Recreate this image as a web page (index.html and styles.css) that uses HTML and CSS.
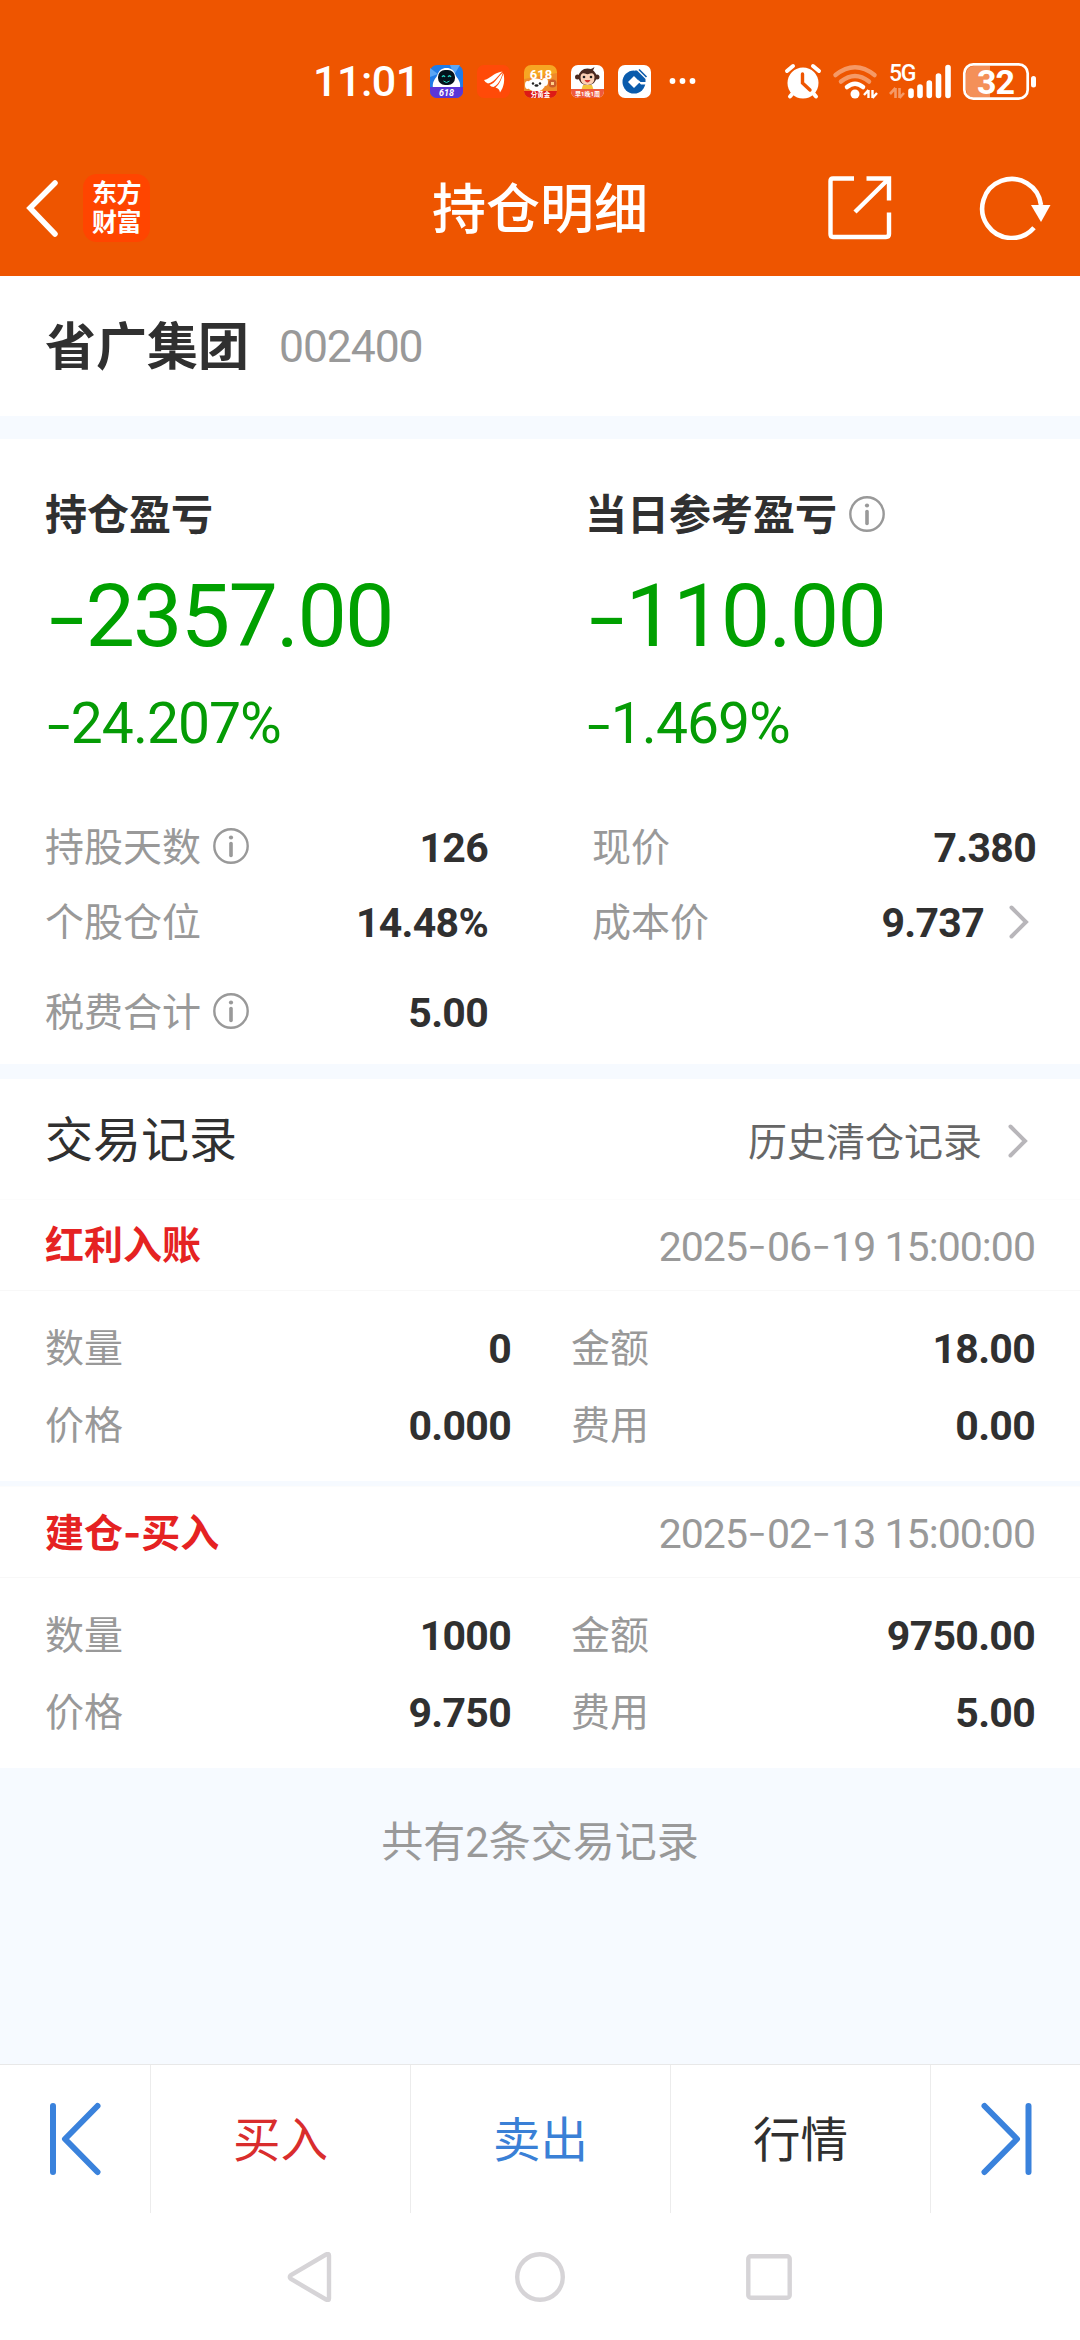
FILE: index.html
```html
<!DOCTYPE html>
<html lang="zh-CN">
<head>
    <meta charset="UTF-8">
    <meta name="viewport" content="width=device-width, initial-scale=1.0">
    <title>持仓明细</title>
    <link rel="stylesheet" href="styles.css">
</head>
<body>
    <svg width="0" height="0" class="defs">
        <symbol id="info" viewBox="0 0 36 36">
            <circle cx="18" cy="18" r="16.7" fill="none" stroke="#999" stroke-width="2.4"/>
            <circle cx="18" cy="9.5" r="2.1" fill="#999"/>
            <path d="M18 15.5V27.5" stroke="#999" stroke-width="3.6" stroke-linecap="round"/>
        </symbol>
        <symbol id="more" viewBox="0 0 20 34">
            <path d="M2.5 2.5L17 17L2.5 31.5" fill="none" stroke="#b8b6ba" stroke-width="4" stroke-linecap="round"/>
        </symbol>
    </svg>

    <div class="header">
        <div class="status">
            <span class="time">11:01</span>
            <div class="apps">
                <svg viewBox="0 0 33 33">
                    <rect width="33" height="33" rx="7" fill="#1f7be8"/>
                    <path d="M20 0L30 0L24 10ZM0 3L8 9L0 12Z" fill="#5aa6f5"/>
                    <path d="M3 23C2 17 5 14 7 11C9 5 12 3 16.5 3C21 3 24 5 26 11C28 14 31 17 30 23Z" fill="#fff"/>
                    <rect x="8" y="5" width="17" height="15" rx="7" fill="#04121c"/>
                    <path d="M12 12Q13.500 9.500 15 12M18 12Q19.500 9.500 21 12" fill="none" stroke="#23d3c0" stroke-width="1.300"/>
                    <path d="M13.500 16Q16.500 19 19.500 16" fill="none" stroke="#23d3c0" stroke-width="1"/>
                    <path d="M0 22H33V26a7 7 0 0 1-7 7H7a7 7 0 0 1-7-7Z" fill="#5a35d8"/>
                    <text x="16.500" y="31" class="tiny it" font-size="9">618</text>
                </svg>
                <svg viewBox="0 0 33 33">
                    <rect width="33" height="33" rx="7" fill="#ff4a08"/>
                    <g fill="#fff">
                        <path d="M7 15C13 14 16 8 25.500 6.500C21 10 18 17 11 18.500Q8 17.500 7 15Z"/>
                        <path d="M12.500 20C19 18 21 11 26 7.500C24 13 22.500 19 16.500 22Q14 22 12.500 20Z"/>
                        <path d="M18.500 22.500C23 19 24.500 13 26.500 8.500C28 15 27 22 23 27.500Q22.500 23.500 18.500 22.500Z"/>
                    </g>
                </svg>
                <svg viewBox="0 0 33 33">
                    <rect width="33" height="33" rx="7" fill="#f7a623"/>
                    <path d="M0 14L33 8V27H0Z" fill="#ef8b2a"/>
                    <text x="17" y="13.500" class="tiny" font-size="13">618</text>
                    <ellipse cx="12" cy="20" rx="9" ry="6.500" fill="#fff"/>
                    <ellipse cx="3.500" cy="20" rx="2.500" ry="4" fill="#fff"/>
                    <ellipse cx="21" cy="17" rx="3" ry="4" fill="#fff"/>
                    <circle cx="9" cy="18.500" r="1.200" fill="#222"/>
                    <circle cx="16" cy="18.500" r="1.200" fill="#222"/>
                    <ellipse cx="12.500" cy="20.500" rx="2" ry="1.300" fill="#222"/>
                    <circle cx="28.500" cy="18.500" r="4" fill="#c95c2c"/>
                    <rect x="27" y="17" width="3" height="3" fill="#ffd08a"/>
                    <path d="M0 26H33a7 7 0 0 1-7 7H7a7 7 0 0 1-7-7Z" fill="#dd1a16"/>
                    <text x="16.500" y="32" class="tiny" font-size="6.500">分黄金</text>
                </svg>
                <svg viewBox="0 0 33 33">
                    <rect width="33" height="33" rx="7" fill="#fff"/>
                    <path d="M14 5Q20 5 23.500 2Q22 7 19 6.500Z" fill="#4a2a20"/>
                    <circle cx="6.500" cy="12" r="2.500" fill="#4a2a20"/>
                    <circle cx="26" cy="12" r="2.500" fill="#4a2a20"/>
                    <ellipse cx="16.500" cy="12" rx="9" ry="8.500" fill="#4a2a20"/>
                    <path d="M9.500 12Q10 7 14 8.500Q16.500 10 19 8.500Q23 7 23.500 12Q23.500 20 16.500 20Q9.500 20 9.500 12Z" fill="#fbd0b4"/>
                    <circle cx="13" cy="12" r="1.300" fill="#222"/>
                    <circle cx="20" cy="12" r="1.300" fill="#222"/>
                    <path d="M13.500 15Q16.500 20 19.500 15Z" fill="#d8342c"/>
                    <path d="M12 20H21L23 26H10Z" fill="#f5c23a"/>
                    <path d="M0 24H33V26a7 7 0 0 1-7 7H7a7 7 0 0 1-7-7Z" fill="#ee5a3c"/>
                    <text x="16.500" y="31" class="tiny" font-size="6">早1晚1周</text>
                </svg>
                <svg viewBox="0 0 33 33">
                    <rect width="33" height="33" rx="7" fill="#fff"/>
                    <circle cx="16" cy="17" r="11.500" fill="#0a5bac"/>
                    <path d="M16 11L22 17L16 23L10 17Z" fill="#fff"/>
                    <path d="M20.500 17L23 19.500H33V11H20Z" fill="#fff"/>
                    <path d="M15 4L20 3.500L30 13V16.500H25Z" fill="#fff"/>
                    <path d="M16.500 5.500H19L27.500 14V17H22.500L16.500 11Z" fill="#0a5bac"/>
                    <path d="M21 4.500L28.500 12" stroke="#0a5bac" stroke-width="1.600"/>
                </svg>
            </div>
            <svg class="dots" viewBox="0 0 27 8"><g fill="#fff"><circle cx="3.500" cy="4" r="2.900"/><circle cx="13.500" cy="4" r="2.900"/><circle cx="23.500" cy="4" r="2.900"/></g></svg>
            <svg class="sys" viewBox="780 55 265 50">
                <!-- 闹钟 -->
                <circle cx="803" cy="82" r="15.500" fill="#fff"/>
                <path d="M787 70L793 65M819 70L813 65" stroke="#fff" stroke-width="4" stroke-linecap="round"/>
                <path d="M793 92L790 95.500M813 92L816 95.500" stroke="#fff" stroke-width="4" stroke-linecap="round"/>
                <path d="M802.500 73V82L810 89" stroke="#ee5500" stroke-width="3.400" fill="none" stroke-linecap="round"/>
                <!-- wifi -->
                <g fill="none" stroke="#fff" stroke-width="4.500" stroke-linecap="round">
                    <path d="M835.500 74Q855 58.500 874.500 74" opacity=".4"/>
                    <path d="M841 80.500Q855 69.500 869 80.500" opacity=".4"/>
                    <path d="M847 86Q855 79.500 863 86"/>
                </g>
                <circle cx="855" cy="93" r="4.500" fill="#fff"/>
                <path d="M868.500 89V97M868.500 89L864 94M872.500 89V97M872.500 97L877 92" stroke="#fff" stroke-width="2.400" fill="none"/>
                <!-- 信号 -->
                <text x="889" y="80" class="net">5G</text>
                <path d="M895.500 87V97M895.500 87L890 93M899.500 87V97M899.500 97L904 92" stroke="#fff" stroke-width="2.600" fill="none" opacity=".4"/>
                <g stroke="#fff" stroke-width="5.600" stroke-linecap="round">
                    <path d="M911 90V94.500M920 86V94.500M929.300 82V94.500M938.500 75V94.500M948 66.500V94.500"/>
                </g>
                <!-- 电池 -->
                <path d="M974 65H990V96.500H974a8 8 0 0 1-8-8V73a8 8 0 0 1 8-8Z" fill="#fff" opacity=".35"/>
                <rect x="964.300" y="63.300" width="63.400" height="34.400" rx="9" fill="none" stroke="#fff" stroke-width="2.700"/>
                <rect x="1031" y="75" width="5" height="11.500" rx="2.500" fill="#fff"/>
                <text x="995.500" y="92.500" class="bat">32</text>
            </svg>
        </div>
        <div class="navbar">
            <svg class="back" viewBox="0 0 36 60"><path d="M32 5L7 30L32 56" fill="none" stroke="#fff" stroke-width="5.500" stroke-linecap="round"/></svg>
            <div class="logo">东方<br>财富</div>
            <h1>持仓明细</h1>
            <svg class="share" viewBox="0 0 64 64">
                <g fill="none" stroke="#fff" stroke-width="4.400">
                    <path d="M26 2.500H5Q2.500 2.500 2.500 5V58Q2.500 61 5 61H58Q61 61 61 58V36.500"/>
                    <path d="M38.500 2.500H61V24.500M60 3.500L27 36"/>
                </g>
            </svg>
            <svg class="refresh" viewBox="0 0 74 64">
                <path d="M55 51.800A29.500 29.500 0 1 1 62 29" fill="none" stroke="#fff" stroke-width="4.600"/>
                <path d="M52 29H71.500L62 46Z" fill="#fff"/>
            </svg>
        </div>
    </div>

    <div class="stock">
        <span class="name">省广集团</span>
        <span class="code">002400</span>
    </div>

    <div class="card">
        <div class="profit">
            <div>
                <p class="label">持仓盈亏</p>
                <p class="big"><span class="dash">-</span>2357.00</p>
                <p class="pct"><span class="dash">-</span>24.207%</p>
            </div>
            <div>
                <p class="label">当日参考盈亏<svg class="info"><use href="#info"/></svg></p>
                <p class="big"><span class="dash">-</span>110.00</p>
                <p class="pct"><span class="dash">-</span>1.469%</p>
            </div>
        </div>
        <div class="detail">
            <div class="cell">持股天数<svg class="info"><use href="#info"/></svg><b>126</b></div>
            <div class="cell">现价<b>7.380</b></div>
            <div class="cell">个股仓位<b>14.48%</b></div>
            <div class="cell">成本价<b>9.737</b><svg class="more"><use href="#more"/></svg></div>
            <div class="cell last">税费合计<svg class="info"><use href="#info"/></svg><b>5.00</b></div>
        </div>
    </div>

    <div class="list-head">
        <h2>交易记录</h2>
        <span class="history">历史清仓记录</span>
        <svg class="more"><use href="#more"/></svg>
    </div>

    <div class="record">
        <div class="record-head">
            <span class="type">红利入账</span>
            <span class="date">2025<i>-</i>06<i>-</i>19 15:00:00</span>
        </div>
        <div class="record-body">
            <div class="cell">数量<b>0</b></div>
            <div class="cell">金额<b>18.00</b></div>
            <div class="cell">价格<b>0.000</b></div>
            <div class="cell">费用<b>0.00</b></div>
        </div>
    </div>
    <div class="record">
        <div class="record-head">
            <span class="type">建仓<span class="dash">-</span>买入</span>
            <span class="date">2025<i>-</i>02<i>-</i>13 15:00:00</span>
        </div>
        <div class="record-body">
            <div class="cell">数量<b>1000</b></div>
            <div class="cell">金额<b>9750.00</b></div>
            <div class="cell">价格<b>9.750</b></div>
            <div class="cell">费用<b>5.00</b></div>
        </div>
    </div>

    <p class="total">共有2条交易记录</p>

    <div class="footer">
        <div class="side"><svg viewBox="0 0 54 74"><path d="M5 4V70M49.500 4L17 37L49.500 70"/></svg></div>
        <div class="btn buy">买入</div>
        <div class="btn sell">卖出</div>
        <div class="btn">行情</div>
        <div class="side"><svg viewBox="0 0 54 74"><path d="M49.500 4V70M5.500 4L38 37L5.500 70"/></svg></div>
    </div>
    <div class="sysnav">
        <svg viewBox="0 0 50 50"><path d="M43 3.500V46.500Q43 49 40 47.500L5 27Q2.500 25 5 23L40 2.500Q43 1 43 3.500Z"/></svg>
        <svg viewBox="0 0 50 50"><circle cx="25" cy="25" r="22.800"/></svg>
        <svg viewBox="0 0 50 50"><rect x="4.300" y="4.300" width="41.400" height="41.400" rx="2.500"/></svg>
    </div>
</body>
</html>
```

FILE: styles.css
```css
* {
    box-sizing: border-box;
    margin: 0;
    padding: 0;
}
body {
    width: 1080px;
    height: 2340px;
    display: flex;
    flex-direction: column;
    background: #f6faff;
    color: #303030;
    font-family: Roboto, "Noto Sans CJK SC", sans-serif;
    line-height: 1;
    overflow: hidden;
}
svg {
    display: block;
    flex: none;
}
.defs {
    position: absolute;
}
.dash, i {
    font-family: Inter, sans-serif;
    font-style: normal;
}

/* 顶部 */
.header {
    height: 276px;
    background: #ee5500;
    color: #fff;
}
.status {
    height: 138px;
    display: flex;
    align-items: center;
    padding: 24px 35px 0 313px;
}
.time {
    width: 117px;
    font-size: 43px;
    font-weight: 500;
    letter-spacing: -0.5px;
}
.apps {
    display: flex;
    gap: 14px;
}
.apps svg {
    width: 33px;
    height: 33px;
}
.tiny {
    fill: #fff;
    font-weight: bold;
    text-anchor: middle;
}
.it {
    font-style: italic;
}
.dots {
    width: 27px;
    height: 8px;
    margin-left: 18px;
}
.sys {
    width: 265px;
    height: 50px;
    margin-left: auto;
}
.net {
    fill: #fff;
    font-size: 23px;
    font-weight: 500;
    letter-spacing: -1.2px;
}
.bat {
    fill: #fff;
    font-size: 34px;
    font-weight: bold;
    text-anchor: middle;
    letter-spacing: -1px;
}
.navbar {
    height: 138px;
    display: flex;
    align-items: center;
    padding: 4px 24px 2px 23px;
}
.back {
    width: 36px;
    height: 60px;
}
.logo {
    width: 67px;
    height: 68px;
    margin-left: 24px;
    padding-top: 5px;
    border-radius: 14px;
    background: #ff4500;
    font-size: 25px;
    line-height: 29px;
    font-weight: bold;
    text-align: center;
    letter-spacing: -0.5px;
}
.navbar h1 {
    margin: 6px 0 0 282px;
    width: 396px;
    font-size: 54px;
    font-weight: 500;
}
.share {
    width: 64px;
    height: 64px;
}
.refresh {
    width: 74px;
    height: 64px;
    margin-left: 87px;
}

.stock {
    height: 140px;
    display: flex;
    align-items: center;
    padding: 3px 45px 0;
    background: #fff;
}
.name {
    font-size: 51px;
    font-weight: bold;
}
.code {
    margin-left: 30px;
    font-size: 44.500px;
    letter-spacing: -1.1px;
    color: #999;
}

/* 盈亏 */
.card {
    height: 625px;
    margin-top: 23px;
    padding-top: 47px;
    background: #fff;
}
.profit {
    display: grid;
    grid-template-columns: 540px 540px;
    padding-left: 45px;
}
.profit p {
    display: flex;
    align-items: center;
}
.profit .dash {
    margin-left: -1px;
    font-size: 1.14em;
    font-weight: 300;
    letter-spacing: -0.04em;
}
.label {
    height: 60px;
    font-size: 42px;
    font-weight: bold;
}
.info {
    width: 36px;
    height: 36px;
    margin: -5px 0 0 12px;
}
.profit .big {
    height: 100px;
    margin-top: 20px;
    font-size: 88px;
    letter-spacing: -1.8px;
    color: #00a000;
}
.profit .pct {
    height: 70px;
    margin-top: 22px;
    font-size: 57px;
    letter-spacing: -1px;
    color: #059b05;
}
.cell {
    display: flex;
    align-items: center;
    font-size: 39px;
    color: #999;
}
.cell b {
    margin-left: auto;
    font-size: 41px;
    letter-spacing: -0.7px;
    color: #303030;
}
.more {
    width: 20px;
    height: 34px;
    margin: -4px 7px 0 25px;
}
.detail {
    display: grid;
    grid-template-columns: 443px 444px;
    grid-auto-rows: 75px;
    column-gap: 104px;
    margin-top: 53px;
    padding-left: 45px;
}
.last {
    margin-top: 15px;
    height: 75px;
}

/* 交易记录 */
.list-head {
    height: 120px;
    display: flex;
    align-items: center;
    margin-top: 15px;
    padding: 4px 45px 0;
    background: #fff;
}
.list-head h2 {
    font-size: 48px;
    font-weight: normal;
}
.history {
    margin: 5px 0 0 auto;
    font-size: 39px;
    color: #666;
}
.list-head .more {
    margin: 0 7px 0 26px;
}
.record {
    height: 282px;
    background: #fff;
}
.record + .record {
    margin-top: 5px;
}
.record-head {
    height: 92px;
    display: flex;
    align-items: center;
    justify-content: space-between;
    padding: 3px 45px 0;
    border-top: 1px solid #fcfcfc;
    border-bottom: 1px solid #f8f8f8;
}
.type {
    font-size: 39px;
    font-weight: bold;
    color: #e52222;
}
.date {
    margin-top: -3px;
    font-size: 41px;
    letter-spacing: -0.95px;
    color: #999;
}
.date i {
    font-size: 44px;
    font-weight: 300;
    letter-spacing: 0;
}
.record-body {
    display: grid;
    grid-template-columns: 466px 464px;
    grid-auto-rows: 77px;
    column-gap: 60px;
    padding: 20px 45px 0;
}
.total {
    height: 296px;
    padding-top: 54px;
    text-align: center;
    font-size: 42px;
    color: #999;
}

/* 底部 */
.footer {
    height: 149px;
    display: flex;
    background: #fff;
    border-top: 1px solid #e8e8e8;
}
.side, .btn {
    display: flex;
    align-items: center;
    justify-content: center;
}
.side {
    width: 150px;
}
.side svg {
    width: 54px;
    height: 74px;
    fill: none;
    stroke: #3a82dc;
    stroke-width: 6;
    stroke-linecap: round;
    stroke-linejoin: round;
}
.btn {
    flex: 1;
    padding-top: 5px;
    font-size: 47.500px;
    border-left: 1px solid #ececec;
}
.btn + .side {
    border-left: 1px solid #ececec;
}
.buy {
    color: #d92d2d;
}
.sell {
    color: #3a80d6;
}
.sysnav {
    height: 127px;
    display: flex;
    align-items: center;
    justify-content: center;
    gap: 179px;
    background: #fff;
}
.sysnav svg {
    width: 50px;
    height: 50px;
    fill: none;
    stroke: #d6d4d7;
    stroke-width: 4.4;
}
```
